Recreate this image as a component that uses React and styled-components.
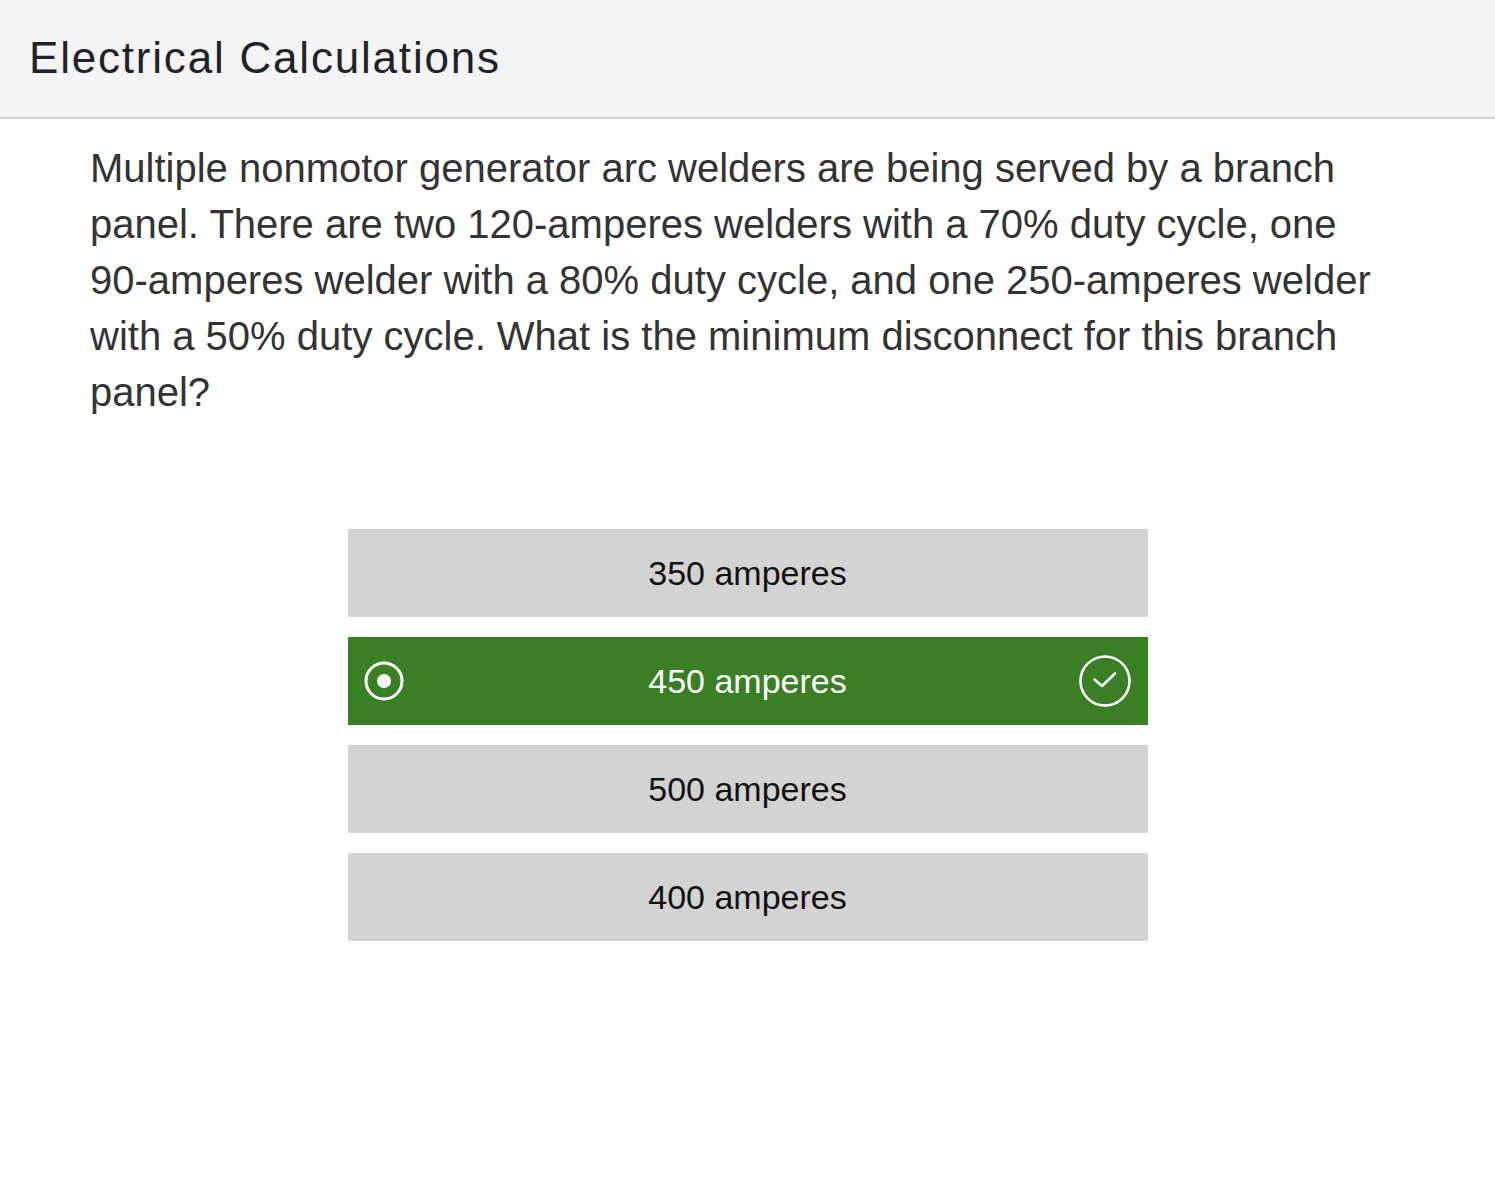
import styled, { createGlobalStyle } from "styled-components";

const GlobalStyle = createGlobalStyle`
  * {
    box-sizing: border-box;
  }
  body {
    margin: 0;
    background: #ffffff;
    font-family: "Liberation Sans", Arial, sans-serif;
  }
`;

const Page = styled.div`
  min-height: 1196px;
  background: #ffffff;
`;

const Header = styled.header`
  height: 119px;
  background: #f4f4f5;
  border-bottom: 2px solid #d4d4d4;
  display: flex;
  align-items: center;
  padding: 0 0 2px 29px;
`;

const Title = styled.h1`
  margin: 0;
  font-size: 44px;
  font-weight: normal;
  letter-spacing: 1.8px;
  color: #1f2229;
`;

const Question = styled.p`
  margin: 0;
  padding: 21px 90px 0 90px;
  font-size: 40px;
  line-height: 56px;
  color: #333333;
`;

const NoWrap = styled.span`
  white-space: nowrap;
`;

const Options = styled.div`
  width: 800px;
  margin: 109px auto 0;
  display: flex;
  flex-direction: column;
  gap: 20px;
`;

const Option = styled.div`
  position: relative;
  height: 88px;
  display: flex;
  align-items: center;
  justify-content: center;
  font-size: 34px;
  background: ${(p) => (p.$correct ? "#3a7f23" : "#d3d3d3")};
  color: ${(p) => (p.$correct ? "#ffffff" : "#111111")};
  cursor: pointer;
`;

const IconSlot = styled.span`
  position: absolute;
  top: 50%;
  transform: translateY(-50%);
  display: flex;
  ${(p) => (p.$side === "left" ? "left: 15px;" : "right: 16px;")}
`;

function RadioIcon() {
  return (
    <svg width="42" height="42" viewBox="0 0 42 42">
      <circle cx="21" cy="21" r="18" fill="none" stroke="#fff" strokeWidth="3" />
      <circle cx="21" cy="21" r="7" fill="#fff" />
    </svg>
  );
}

function CheckIcon() {
  return (
    <svg width="54" height="54" viewBox="0 0 54 54">
      <circle cx="27" cy="27" r="24.5" fill="none" stroke="#fff" strokeWidth="2.6" />
      <path
        d="M16.5 25.5 L24 32 L37 19.5"
        fill="none"
        stroke="#fff"
        strokeWidth="2.6"
        strokeLinecap="round"
        strokeLinejoin="round"
      />
    </svg>
  );
}

const answers = [
  { label: "350 amperes" },
  { label: "450 amperes", correct: true },
  { label: "500 amperes" },
  { label: "400 amperes" },
];

export default function App() {
  return (
    <Page>
      <GlobalStyle />
      <Header>
        <Title>Electrical Calculations</Title>
      </Header>
      <Question>
        Multiple nonmotor generator arc welders are being served by a branch
        panel. There are two <NoWrap>120-amperes</NoWrap> welders with a 70%
        duty cycle, one <NoWrap>90-amperes</NoWrap> welder with a 80% duty
        cycle, and one <NoWrap>250-amperes</NoWrap> welder with a 50% duty
        cycle. What is the minimum disconnect for this branch panel?
      </Question>
      <Options>
        {answers.map((a) => (
          <Option key={a.label} $correct={a.correct}>
            {a.correct && (
              <IconSlot $side="left">
                <RadioIcon />
              </IconSlot>
            )}
            {a.label}
            {a.correct && (
              <IconSlot $side="right">
                <CheckIcon />
              </IconSlot>
            )}
          </Option>
        ))}
      </Options>
    </Page>
  );
}
